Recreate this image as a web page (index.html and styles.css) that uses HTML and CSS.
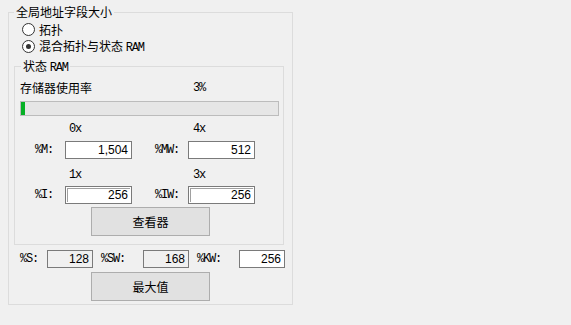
FILE: index.html
```html
<!DOCTYPE html>
<html lang="zh">
<head>
<meta charset="utf-8">
<title>全局地址字段大小</title>
<link rel="stylesheet" href="styles.css">
</head>
<body>
<div class="outer">
  <div class="legend">全局地址字段大小</div>
  <div class="radio-row first"><span class="radio"></span><span class="rlabel">拓扑</span></div>
  <div class="radio-row"><span class="radio checked"></span><span class="rlabel">混合拓扑与状态 <span class="m">RAM</span></span></div>

  <div class="inner">
    <div class="legend inner-legend">状态 <span class="m">RAM</span></div>
    <div class="usage-row"><span class="usage-label">存储器使用率</span><span class="m">3%</span></div>
    <div class="bar"><div class="fill" style="width:4px"></div></div>

    <div class="hdr-row first-hdr"><span class="m hdr1">0x</span><span class="m hdr2">4x</span></div>
    <div class="field-row">
      <span class="m lab1">%M:</span><span class="box">1,504</span>
      <span class="m lab2">%MW:</span><span class="box">512</span>
    </div>
    <div class="hdr-row second-hdr"><span class="m hdr1">1x</span><span class="m hdr2">3x</span></div>
    <div class="field-row second-fields">
      <span class="m lab1">%I:</span><span class="box sunk"><span class="sunk-in">256</span></span>
      <span class="m lab2">%IW:</span><span class="box sunk"><span class="sunk-in">256</span></span>
    </div>
    <div class="btn btn-viewer">查看器</div>
  </div>

  <div class="bottom-row">
    <span class="m blab1">%S:</span><span class="box small ro">128</span>
    <span class="m blab">%SW:</span><span class="box small ro">168</span>
    <span class="m blab">%KW:</span><span class="box small">256</span>
  </div>
  <div class="btn btn-max">最大值</div>
</div>
</body>
</html>
```

FILE: styles.css
```css
* { box-sizing: border-box; }

body {
  margin: 0;
  background: #f0f0f0;
  color: #000;
  font-family: "Noto Sans CJK SC", "Liberation Sans", sans-serif;
  font-size: 12px;
  width: 571px;
  height: 325px;
  overflow: hidden;
}

.m {
  font-family: "Liberation Mono", "Noto Sans CJK SC", monospace;
  font-size: 12px;
  letter-spacing: -1.2px;
}

.outer {
  margin: 12px 0 0 8px;
  width: 285px;
  height: 293px;
  border: 1px solid #dcdcdc;
  display: flex;
  flex-direction: column;
  align-items: flex-start;
}

.legend {
  margin: -8px 0 0 5px;
  padding: 0 2px;
  background: #f0f0f0;
  height: 14px;
  line-height: 14px;
  white-space: nowrap;
}

.radio-row {
  display: flex;
  align-items: center;
  height: 17px;
  margin-left: 13px;
  gap: 4px;
  line-height: 17px;
}
.radio-row.first { margin-top: 2px; }

.radio {
  width: 13px;
  height: 13px;
  border: 1px solid #333;
  border-radius: 50%;
  background: #fff;
  display: flex;
  align-items: center;
  justify-content: center;
}
.radio.checked::after {
  content: "";
  width: 5px;
  height: 5px;
  border-radius: 50%;
  background: #333;
}

.inner {
  margin: 11px 0 0 5px;
  width: 270px;
  height: 179px;
  border: 1px solid #dcdcdc;
  display: flex;
  flex-direction: column;
  align-items: flex-start;
}
.inner-legend { margin-left: 6px; }

.usage-row {
  display: flex;
  margin: 8px 0 0 5px;
  height: 14px;
  line-height: 14px;
  align-items: center;
}
.usage-label { width: 173px; }

.bar {
  margin: 6px 0 0 5px;
  width: 259px;
  height: 15px;
  border: 1px solid #bcbcbc;
  background: #e6e6e6;
}
.fill {
  height: 13px;
  background: #06b025;
}

.hdr-row {
  display: flex;
  height: 14px;
  line-height: 14px;
  align-items: center;
}
.first-hdr { margin-top: 6px; }
.second-hdr { margin-top: 9px; }
.hdr1 { margin-left: 54px; width: 124px; }

.field-row {
  display: flex;
  align-items: center;
  margin-top: 5px;
  height: 18px;
}
.second-fields { margin-top: 4px; }
.lab1 { margin-left: 20px; width: 30px; }
.lab2 { margin-left: 23px; width: 33px; }

.box {
  width: 67px;
  height: 18px;
  border: 1px solid #7a7a7a;
  background: #fff;
  text-align: right;
  padding-right: 3px;
  font-family: "Liberation Sans", sans-serif;
  font-size: 12px;
  line-height: 16px;
}
.box.sunk {
  padding: 1px;
}
.sunk-in {
  display: block;
  height: 14px;
  border-top: 1px solid #a0a0a0;
  border-left: 1px solid #a0a0a0;
  line-height: 13px;
  padding-right: 2px;
  text-align: right;
}
.box.small { width: 46px; }
.box.ro { background: #f0f0f0; }

.btn {
  width: 119px;
  height: 29px;
  border: 1px solid #adadad;
  background: #e1e1e1;
  display: flex;
  align-items: center;
  justify-content: center;
  font-size: 12px;
}
.btn-viewer { margin: 3px 0 0 76px; }
.btn-max { margin: 4px 0 0 82px; }

.bottom-row {
  display: flex;
  align-items: center;
  margin: 5px 0 0 11px;
  height: 18px;
}
.blab1 { width: 27px; }
.blab { margin-left: 8px; width: 42px; }
```
